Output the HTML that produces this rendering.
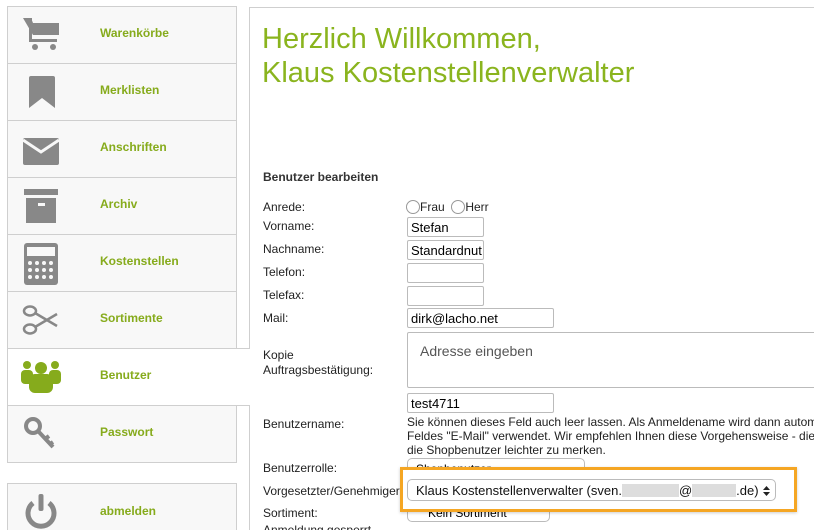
<!DOCTYPE html>
<html><head><meta charset="utf-8"><style>
html,body{margin:0;width:814px;height:530px;overflow:hidden;background:#fff;font-family:"Liberation Sans",Arial,sans-serif;position:relative}
.a{position:absolute}
.row{position:absolute;left:7px;width:230px;height:58px;box-sizing:border-box;background:#f8f8f8;border:1px solid #cfcfcf}
.row span{position:absolute;left:92px;top:19px;font-size:12px;font-weight:bold;color:#86ab1c}
.row svg{position:absolute;left:13px;top:8px}
.lab{position:absolute;left:263px;font-size:12px;color:#222}
.inp{position:absolute;left:407px;height:20px;border:1px solid #bbb;border-radius:2px;background:#fff;font-size:13px;line-height:20px;padding-left:3px;box-sizing:border-box}
</style></head><body>
<div class="a" style="left:249px;top:7px;width:600px;height:600px;border-left:1px solid #cfcfcf;border-top:1px solid #cfcfcf"></div>
<div class="row" style="top:6px"><svg width="40" height="40" viewBox="0 0 40 40"><path d="M2 3h8l2 5h26v12H12z" fill="#888"/><rect x="8" y="3" width="3" height="24" fill="#888"/><rect x="8" y="24" width="28" height="3" fill="#888"/><circle cx="14" cy="32" r="3" fill="#888"/><circle cx="32" cy="32" r="3" fill="#888"/></svg><span>Warenkörbe</span></div>
<div class="row" style="top:63px"><svg width="40" height="40" viewBox="0 0 40 40"><path d="M8 6q0-2 2-2h22q2 0 2 2v30l-13-10-13 10z" fill="#888"/></svg><span>Merklisten</span></div>
<div class="row" style="top:120px"><svg width="40" height="40" viewBox="0 0 40 40"><rect x="2" y="9" width="36" height="27" rx="2" fill="#888"/><path d="M2 11l18 12 18-12" stroke="#f8f8f8" stroke-width="3" fill="none"/></svg><span>Anschriften</span></div>
<div class="row" style="top:177px"><svg width="40" height="40" viewBox="0 0 40 40"><rect x="3" y="3" width="34" height="6" fill="#888"/><rect x="5" y="12" width="30" height="25" fill="#888"/><rect x="17" y="17" width="7" height="3" fill="#f8f8f8"/></svg><span>Archiv</span></div>
<div class="row" style="top:234px"><svg width="40" height="42" viewBox="0 0 40 42"><rect x="3" y="0" width="34" height="42" rx="3" fill="#888"/><rect x="6" y="4" width="28" height="9" fill="#f8f8f8"/><g fill="#f8f8f8"><circle cx="9" cy="20" r="2"/><circle cx="16" cy="20" r="2"/><circle cx="23" cy="20" r="2"/><circle cx="30" cy="20" r="2"/><circle cx="9" cy="27" r="2"/><circle cx="16" cy="27" r="2"/><circle cx="23" cy="27" r="2"/><circle cx="30" cy="27" r="2"/><circle cx="9" cy="34" r="2"/><circle cx="16" cy="34" r="2"/><circle cx="23" cy="34" r="2"/><circle cx="30" cy="34" r="2"/></g></svg><span>Kostenstellen</span></div>
<div class="row" style="top:291px"><svg width="40" height="40" viewBox="0 0 40 40"><g stroke="#888" stroke-width="2.5" fill="none"><ellipse cx="9" cy="11" rx="6" ry="4.5"/><ellipse cx="9" cy="29" rx="6" ry="4.5"/><path d="M14 13l22 13M14 27l22-13"/></g></svg><span>Sortimente</span></div>
<div class="row" style="top:348px;width:243px;background:#fff;border-right:none"><svg width="40" height="40" viewBox="0 0 40 40"><g fill="#86ab1c"><circle cx="6" cy="8" r="4"/><circle cx="34" cy="8" r="4"/><circle cx="20" cy="11" r="6"/><rect x="0" y="13" width="12" height="14" rx="4"/><rect x="28" y="13" width="12" height="14" rx="4"/><rect x="8" y="17" width="24" height="19" rx="6"/></g></svg><span>Benutzer</span></div>
<div class="row" style="top:405px"><svg width="40" height="40" viewBox="0 0 40 40"><g stroke="#888" fill="none" stroke-width="4"><circle cx="12" cy="12" r="7"/><path d="M17 17l15 16M24 25l4-3M29 30l3-2"/></g></svg><span>Passwort</span></div>
<div class="row" style="top:483px;height:60px"><svg width="40" height="42" viewBox="0 0 40 42"><path d="M12 11a13 13 0 1 0 16 0" stroke="#888" stroke-width="5" fill="none"/><rect x="17.5" y="2" width="5" height="17" rx="2" fill="#888"/></svg><span style="top:20px">abmelden</span></div>
<div class="a" style="left:262px;top:22px;font-size:29px;color:#8ab41e;line-height:34px">Herzlich Willkommen,<br>Klaus Kostenstellenverwalter</div>
<div class="a" style="left:263px;top:170px;font-size:12px;font-weight:bold;color:#333">Benutzer bearbeiten</div>
<div class="lab" style="top:200px">Anrede:</div>
<div class="a" style="left:406px;top:200px;font-size:12px;color:#222"><span style="display:inline-block;width:12px;height:12px;border:1px solid #999;border-radius:50%;vertical-align:-3px"></span>Frau&nbsp;&nbsp;<span style="display:inline-block;width:12px;height:12px;border:1px solid #999;border-radius:50%;vertical-align:-3px"></span>Herr</div>
<div class="lab" style="top:219px">Vorname:</div><div class="inp" style="top:217px;width:77px">Stefan</div>
<div class="lab" style="top:242px">Nachname:</div><div class="inp" style="top:240px;width:77px;overflow:hidden;white-space:nowrap">Standardnut</div>
<div class="lab" style="top:265px">Telefon:</div><div class="inp" style="top:263px;width:77px"></div>
<div class="lab" style="top:288px">Telefax:</div><div class="inp" style="top:286px;width:77px"></div>
<div class="lab" style="top:311px">Mail:</div><div class="inp" style="top:308px;width:147px">dirk@lacho.net</div>
<div class="lab" style="top:348px;line-height:15px">Kopie<br>Auftragsbestätigung:</div>
<div class="inp" style="top:332px;width:420px;height:56px;line-height:normal;padding:10px 12px;font-size:14px;color:#555">Adresse eingeben</div>
<div class="inp" style="top:393px;width:147px">test4711</div>
<div class="lab" style="top:417px">Benutzername:</div>
<div class="a" style="left:407px;top:415px;font-size:12px;line-height:14px;color:#222;white-space:nowrap">Sie können dieses Feld auch leer lassen. Als Anmeldename wird dann autom<br>Feldes "E-Mail" verwendet. Wir empfehlen Ihnen diese Vorgehensweise - die<br>die Shopbenutzer leichter zu merken.</div>
<div class="lab" style="top:461px">Benutzerrolle:</div>
<div class="inp" style="top:458px;width:178px;border-radius:5px;font-size:12px;padding-left:8px">Shopbenutzer</div>
<div class="lab" style="top:484px">Vorgesetzter/Genehmiger</div>
<div class="lab" style="top:506px">Sortiment:</div>
<div class="inp" style="top:502px;width:143px;border-radius:5px;font-size:12px;padding-left:20px">Kein Sortiment</div>
<div class="lab" style="top:523px">Anmeldung gesperrt</div>
<div class="a" style="left:400px;top:467px;width:397px;height:45px;border:3px solid #f5a623;background:#fff;box-sizing:border-box;box-shadow:0 1px 3px rgba(0,0,0,.2)"></div>
<div class="inp" style="top:479px;width:369px;height:22px;border-radius:5px;font-size:13px;padding-left:8px;color:#111;line-height:21px;white-space:nowrap">Klaus Kostenstellenverwalter (sven.<span style="display:inline-block;width:57px;height:13px;background:#ddd;vertical-align:-2px"></span>@<span style="display:inline-block;width:44px;height:13px;background:#ddd;vertical-align:-2px"></span>.de)<svg style="position:absolute;right:5px;top:6px" width="7" height="10" viewBox="0 0 7 10"><path d="M0 4L3.5 0 7 4zM0 6l3.5 4L7 6z" fill="#222"/></svg></div>
</body></html>
